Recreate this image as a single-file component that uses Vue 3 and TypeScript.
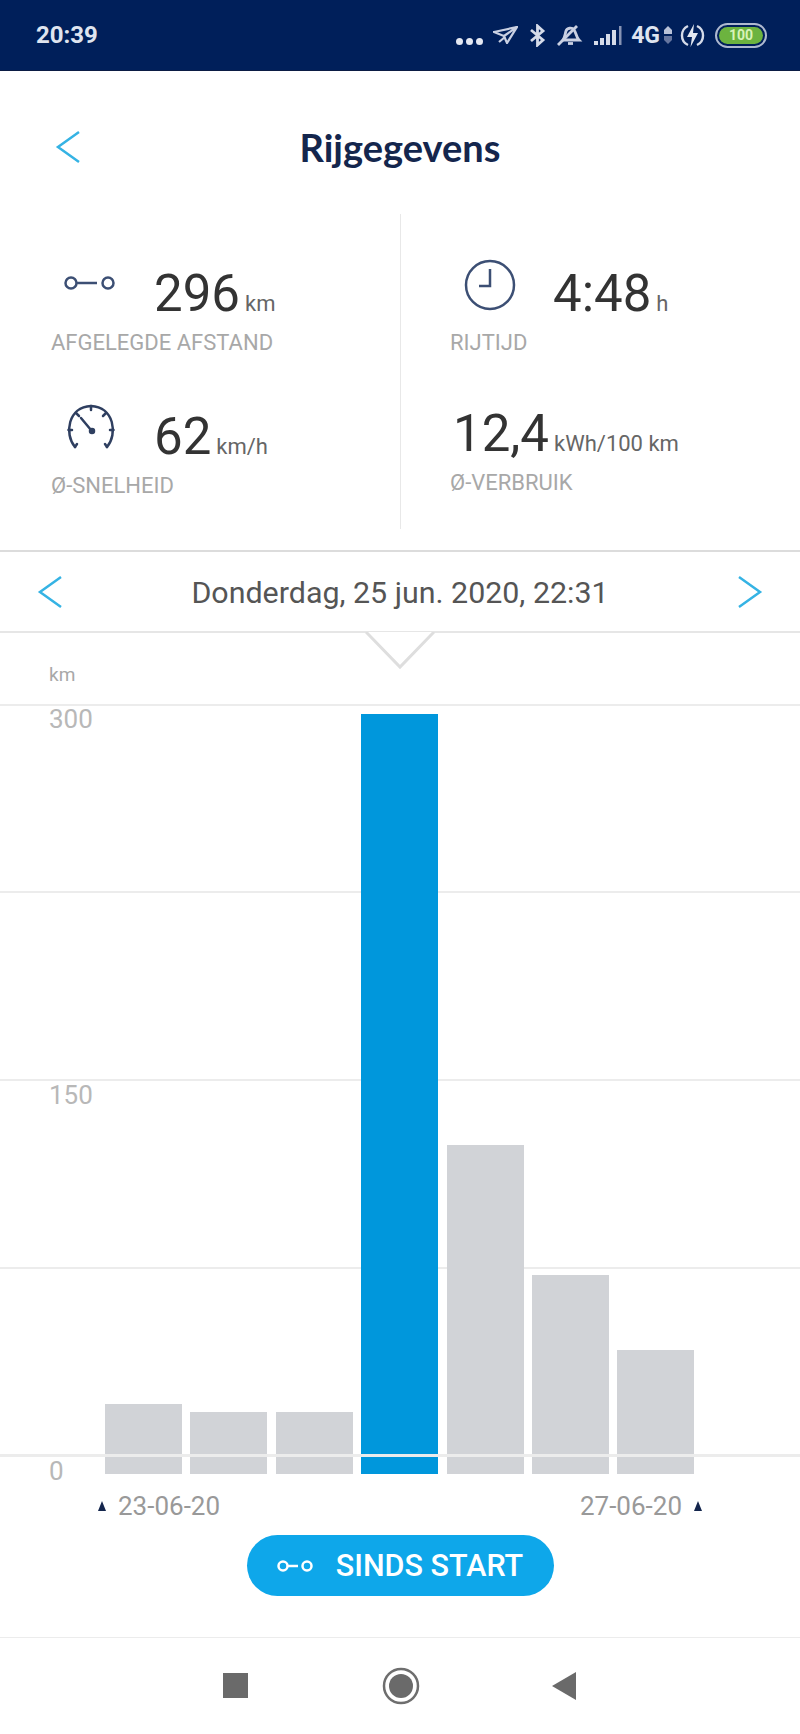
<template>
  <div class="page">
    <div class="status">
      <span class="time">20:39</span>
      <div class="status-icons">
        <span class="dots"><i></i><i></i><i></i></span>
        <svg class="ic-plane" width="25" height="18" viewBox="0 0 25 18" fill="none" stroke="#c9d0e2" stroke-width="2.200">
          <path d="M1 6 L24 1 L14 17 L11 10 Z M11 10 L24 1" />
          <path d="M6 16 L12 11" />
        </svg>
        <svg class="ic-bt" width="17" height="23" viewBox="0 0 17 23" fill="none" stroke="#d5dbe9" stroke-width="2.800">
          <path d="M2 6 L14 16 L8.500 21 V2 L14 7 L2 17" />
        </svg>
        <svg class="ic-bell" width="27" height="21" viewBox="0 0 27 21" fill="none" stroke="#c9d0e2" stroke-width="2.800">
          <path d="M7 15 C9 12 9 9 10 6 C11 3 16 2 18 5 C20 7 20 12 23 15 Z" />
          <path d="M12 18.500 H17" />
          <path d="M2 20 L21 1" />
        </svg>
        <svg class="ic-signal" width="28" height="19" viewBox="0 0 28 19" fill="#d5dbe9">
          <rect x="0" y="15" width="4" height="4" />
          <rect x="6" y="12" width="4" height="7" />
          <rect x="12" y="8" width="4" height="11" />
          <rect x="18" y="4" width="4" height="15" />
          <rect x="25" y="0" width="2.500" height="19" fill="#8794b4" />
        </svg>
        <span class="net">4G</span>
        <svg class="ic-arrows" width="8" height="18" viewBox="0 0 8 18">
          <path d="M4 0 L8 4 V8 H0 V4 Z" fill="#b9c2d8" />
          <path d="M0 10 H8 V14 L4 18 L0 14 Z" fill="#66769f" />
        </svg>
        <svg class="ic-charge" width="25" height="25" viewBox="0 0 25 25" fill="none">
          <path d="M8 3 A10.500 10.500 0 0 0 8 22 M17 3 A10.500 10.500 0 0 1 17 22" stroke="#d5dbe9" stroke-width="2.400" />
          <path d="M14 1 L7 14 H12 L10.500 24 L18 10 H13 Z" fill="#e2e7f1" />
        </svg>
        <span class="battery"><span class="battery-fill">100</span></span>
      </div>
    </div>

    <header class="head">
      <svg class="chev" width="26" height="34" viewBox="0 0 26 34" fill="none">
        <path d="M24 2 L3 17 L24 32" />
      </svg>
      <h1>Rijgegevens</h1>
    </header>

    <section class="stats">
      <div class="col">
        <div class="stat">
          <div class="value-row">
            <div class="icon-box">
              <svg width="54" height="18" viewBox="0 0 54 18" fill="none" stroke="#3c4f74" stroke-width="2.500">
                <circle cx="7" cy="9" r="5.500" />
                <path d="M13 9 H33" />
                <circle cx="44" cy="9" r="5.500" />
              </svg>
            </div>
            <span class="value">296</span><span class="unit">km</span>
          </div>
          <div class="label">AFGELEGDE AFSTAND</div>
        </div>
        <div class="stat">
          <div class="value-row">
            <div class="icon-box">
              <svg class="gauge" width="50" height="46" viewBox="0 0 50 46" fill="none" stroke="#2f3f60" stroke-width="2.500" stroke-linecap="round">
                <path d="M9 43 C-2 30 2 3 25 2 C48 3 52 30 41 43" />
                <path d="M25 2 V6 M10 9 L13 12 M40 9 L37 12 M2.500 26 H6 M47.500 26 H44 M9 43 L11 40 M41 43 L39 40" />
                <path d="M15 14 L25 26" />
                <circle cx="26" cy="27" r="2" fill="#2f3f60" />
              </svg>
            </div>
            <span class="value">62</span><span class="unit">km/h</span>
          </div>
          <div class="label">Ø-SNELHEID</div>
        </div>
      </div>
      <div class="col">
        <div class="stat">
          <div class="value-row">
            <div class="icon-box">
              <svg class="clock" width="52" height="52" viewBox="0 0 52 52" fill="none" stroke="#3c4f74" stroke-width="2.500">
                <circle cx="26" cy="26" r="24" />
                <path d="M26 10 V27 H15" />
              </svg>
            </div>
            <span class="value">4:48</span><span class="unit">h</span>
          </div>
          <div class="label">RIJTIJD</div>
        </div>
        <div class="stat tight">
          <div class="value-row">
            <span class="value">12,4</span><span class="unit">kWh/100 km</span>
          </div>
          <div class="label">Ø-VERBRUIK</div>
        </div>
      </div>
    </section>

    <div class="date-nav">
      <svg class="chev" width="26" height="34" viewBox="0 0 26 34" fill="none">
        <path d="M24 2 L3 17 L24 32" />
      </svg>
      <span class="date">Donderdag, 25 jun. 2020, 22:31</span>
      <svg class="chev" width="26" height="34" viewBox="0 0 26 34" fill="none">
        <path d="M2 2 L23 17 L2 32" />
      </svg>
      <svg class="notch" width="70" height="38" viewBox="0 0 70 38">
        <path d="M1 0 L35 35 L69 0" fill="#fff" stroke="#dedede" stroke-width="3" />
      </svg>
    </div>

    <div class="axis-unit">km</div>

    <div class="chart">
      <div v-for="g in gridLines" :key="g" class="grid-line" :style="{ top: g + 'px' }"></div>
      <span v-for="t in ticks" :key="t.text" class="tick" :style="{ top: t.top + 'px' }">{{ t.text }}</span>
      <div class="bars">
        <div
          v-for="(b, i) in bars"
          :key="i"
          class="bar"
          :class="{ active: i === 3 }"
          :style="{ height: barHeight(b) + 'px' }"
        ></div>
      </div>
      <div class="zero-line"></div>
    </div>

    <div class="range">
      <span class="range-item"><i class="tri"></i>23-06-20</span>
      <span class="range-item">27-06-20<i class="tri"></i></span>
    </div>

    <div class="pill-wrap">
      <button class="pill">
        <svg width="37" height="14" viewBox="0 0 37 14" fill="none" stroke="#fff" stroke-width="2.500">
          <circle cx="6" cy="7" r="4.500" />
          <path d="M11 7 H21" />
          <circle cx="30" cy="7" r="4.500" />
        </svg>
        SINDS START
      </button>
    </div>

    <nav class="android">
      <span class="nav-square"></span>
      <svg width="38" height="38" viewBox="0 0 38 38">
        <circle cx="19" cy="19" r="17" fill="none" stroke="#6e6e6e" stroke-width="2.500" />
        <circle cx="19" cy="19" r="12" fill="#6a6a6a" />
      </svg>
      <svg class="nav-back" width="25" height="28" viewBox="0 0 25 28">
        <path d="M24 0 V28 L0 14 Z" fill="#6a6a6a" />
      </svg>
    </nav>
  </div>
</template>

<script setup lang="ts">
const gridLines = [0, 187, 375, 563]
const ticks = [
  { text: '300', top: -1 },
  { text: '150', top: 375 },
  { text: '0', top: 751 },
]
// km per day, the last bars in the period
const bars = [20.4, 17, 17, 296, 124, 72, 42]

function barHeight(km: number) {
  return Math.round(km * 2.503 + 19)
}
</script>

<style>
body {
  background: #fff;
}
</style>

<style scoped>
.page {
  width: 800px;
  height: 1734px;
  overflow: hidden;
  background: #fff;
  font-family: Roboto, "Liberation Sans", sans-serif;
}

.status {
  height: 71px;
  box-sizing: border-box;
  background: #001f5a;
  border-bottom: 1px solid #0b1c44;
  display: flex;
  align-items: center;
  justify-content: space-between;
  padding: 0 33px 0 36px;
}
.time {
  color: #dfe4ef;
  font-size: 24px;
  font-weight: 700;
}
.status-icons {
  display: flex;
  align-items: center;
}
.dots {
  display: flex;
  gap: 3px;
  margin-top: 12px;
  margin-right: 10px;
}
.dots i {
  width: 7px;
  height: 7px;
  border-radius: 50%;
  background: #e4e8f2;
}
.ic-bt {
  margin-left: 11px;
}
.ic-bell {
  margin-left: 10px;
}
.ic-signal {
  margin-left: 11px;
}
.net {
  margin-left: 9px;
  color: #dfe4ef;
  font-size: 23px;
  font-weight: 700;
}
.ic-arrows {
  margin-left: 4px;
}
.ic-charge {
  margin-left: 8px;
}
.battery {
  margin-left: 10px;
  width: 52px;
  height: 25px;
  box-sizing: border-box;
  border: 2px solid #aeb9cf;
  border-radius: 13px;
  padding: 2px;
  display: flex;
}
.battery-fill {
  flex: 1;
  background: #6cb33f;
  border-radius: 9px;
  color: #d8f2b8;
  font-size: 14px;
  font-weight: 700;
  line-height: 17px;
  text-align: center;
}

.head {
  position: relative;
  height: 143px;
  box-sizing: border-box;
  padding-top: 55px;
  text-align: center;
}
.head .chev {
  position: absolute;
  left: 55px;
  top: 59px;
}
.head h1 {
  margin: 0;
  font-family: Lato, sans-serif;
  font-size: 38px;
  font-weight: 700;
  line-height: 42px;
  color: #14264d;
}
.chev path {
  stroke: #35b3e4;
  stroke-width: 2.500;
}

.stats {
  display: grid;
  grid-template-columns: 1fr 1fr;
  height: 315px;
  margin-bottom: 21px;
}
.col {
  padding: 52px 0 0 51px;
  display: flex;
  flex-direction: column;
  gap: 54px;
}
.col + .col {
  border-left: 1px solid #e8e8e8;
  padding-left: 49px;
}
.stat.tight {
  margin-top: -3px;
}
.stat.tight .value {
  margin-left: 3px;
}
.value-row {
  display: flex;
  align-items: baseline;
  height: 56px;
  line-height: 56px;
}
.icon-box {
  width: 80px;
  margin-right: 23px;
  height: 56px;
  display: flex;
  align-items: center;
  justify-content: center;
  align-self: center;
}
.icon-box svg {
  margin-top: -22px;
}
.icon-box .gauge {
  margin-top: -20px;
}
.icon-box .clock {
  margin-top: -18px;
}
.value {
  font-size: 51px;
  color: #333;
}
.unit {
  margin-left: 5px;
  font-size: 22px;
  color: #666;
}
.label {
  margin-top: 9px;
  font-size: 22px;
  line-height: 24px;
  color: #a8a8a8;
}

.date-nav {
  position: relative;
  height: 83px;
  box-sizing: border-box;
  border-top: 2px solid #dcdcdc;
  border-bottom: 2px solid #e6e6e6;
  display: flex;
  align-items: center;
  justify-content: space-between;
  padding: 0 37px;
}
.date {
  font-size: 30.400px;
  color: #555;
  padding-top: 2px;
}
.notch {
  position: absolute;
  left: 365px;
  top: 80px;
}

.axis-unit {
  height: 71px;
  box-sizing: border-box;
  padding: 30px 0 0 49px;
  font-size: 19px;
  line-height: 24px;
  color: #a8a8a8;
}

.chart {
  position: relative;
  height: 770px;
}
.grid-line {
  position: absolute;
  left: 0;
  right: 0;
  height: 2px;
  background: #ececec;
}
.tick {
  position: absolute;
  left: 49px;
  font-size: 26px;
  line-height: 32px;
  color: #b8b8b8;
}
.bars {
  position: absolute;
  left: 105px;
  bottom: 0;
  display: flex;
  align-items: flex-end;
  gap: 8.400px;
}
.bar {
  width: 77px;
  background: #d1d3d7;
}
.bar.active {
  background: #0097dc;
}
.zero-line {
  position: absolute;
  left: 0;
  right: 0;
  top: 750px;
  height: 3px;
  background: #ececec;
}

.range {
  display: flex;
  justify-content: space-between;
  padding: 17px 0 0 98px;
  width: 702px;
  height: 46px;
  box-sizing: border-box;
}
.range-item {
  display: flex;
  align-items: center;
  gap: 12px;
  font-size: 26px;
  line-height: 32px;
  color: #999;
}
.tri {
  width: 0;
  height: 0;
  border-left: 4px solid transparent;
  border-right: 4px solid transparent;
  border-bottom: 10px solid #14264d;
}

.pill-wrap {
  display: flex;
  justify-content: center;
  height: 118px;
  border-bottom: 1px solid #ececec;
  box-sizing: border-box;
  padding-top: 15px;
}
.pill {
  width: 307px;
  height: 61px;
  border: 0;
  border-radius: 31px;
  background: #0ea7ea;
  color: #fff;
  font-family: inherit;
  font-size: 30.500px;
  font-weight: 500;
  display: flex;
  align-items: center;
  justify-content: center;
  gap: 22px;
  padding: 0;
}

.android {
  height: 95px;
  display: flex;
  align-items: center;
  justify-content: center;
  gap: 134px;
}
.nav-square {
  width: 25px;
  height: 25px;
  background: #6a6a6a;
}
.nav-back {
  margin-left: -2px;
}
</style>
